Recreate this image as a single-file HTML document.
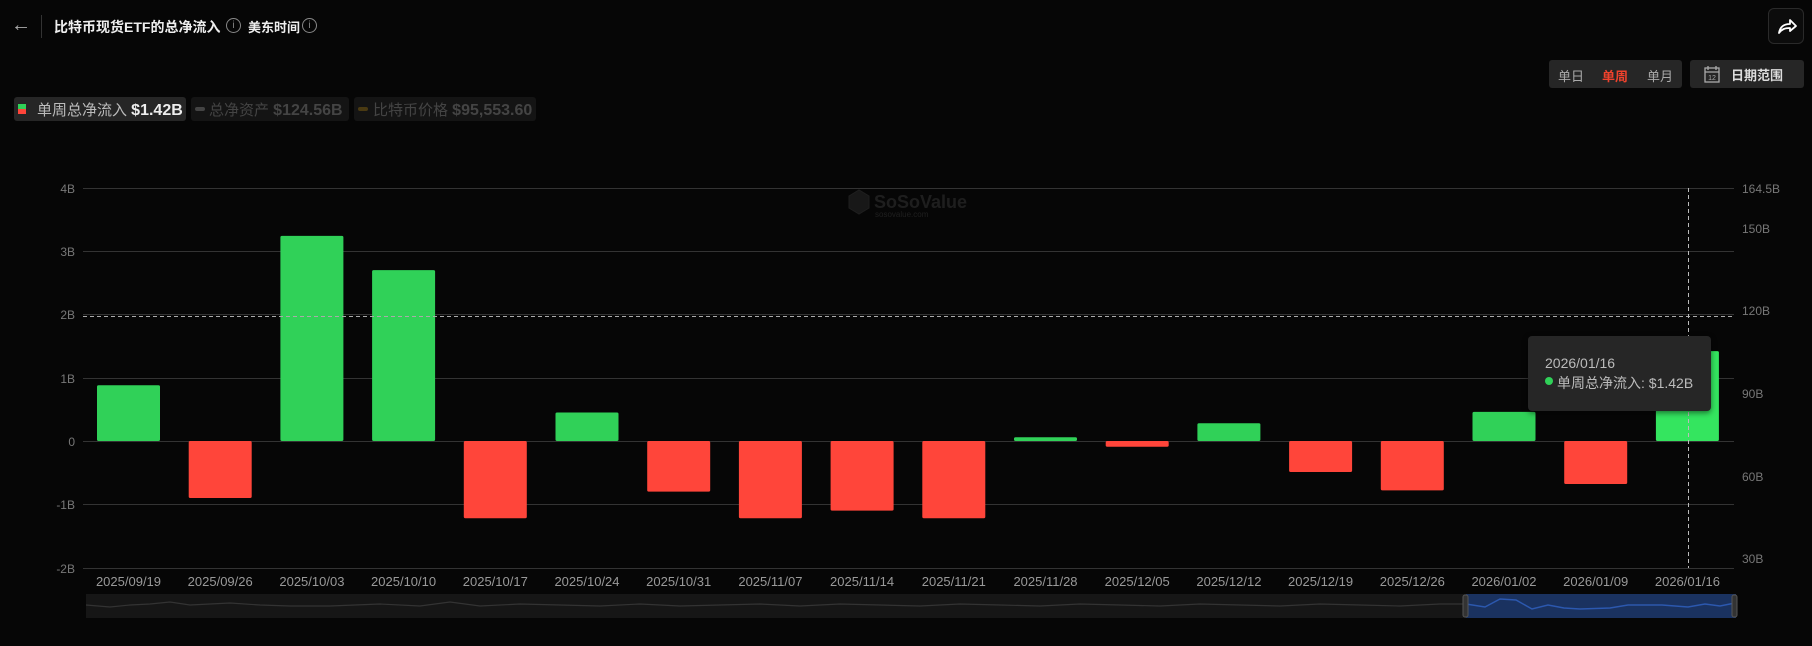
<!DOCTYPE html>
<html><head><meta charset="utf-8"><style>
html,body{margin:0;padding:0;background:#060606;width:1812px;height:646px;overflow:hidden;font-family:"Liberation Sans","Noto Sans CJK SC",sans-serif;}
.a{position:absolute;white-space:nowrap}
</style></head><body>
<div class="a" style="left:11px;top:15px;color:#aaa;font-size:20px;line-height:20px">&#8592;</div>
<div class="a" style="left:41px;top:15px;width:1px;height:23px;background:#333"></div>
<div class="a" style="left:54px;top:17px;color:#eee;font-size:14px;font-weight:bold">比特币现货ETF的总净流入</div>
<div class="a" style="left:226px;top:18px;width:13px;height:13px;border:1px solid #888;border-radius:50%;color:#888;font-size:10px;text-align:center;line-height:13px">i</div>
<div class="a" style="left:248px;top:17px;color:#eee;font-size:13px;font-weight:bold">美东时间</div>
<div class="a" style="left:302px;top:18px;width:13px;height:13px;border:1px solid #888;border-radius:50%;color:#888;font-size:10px;text-align:center;line-height:13px">i</div>

<div class="a" style="left:1768px;top:8px;width:34px;height:34px;border:1px solid #2a2a2a;border-radius:6px;background:#0c0c0c">
<svg width="34" height="34" viewBox="0 0 34 34"><path d="M10 24 C11 18 15 15 21 15 L21 11 L27 17 L21 22 L21 19 C16 19 13 20 10 24Z" fill="none" stroke="#fff" stroke-width="1.8" stroke-linejoin="round"/></svg></div>

<div class="a" style="left:1549px;top:60px;width:133px;height:28px;background:#262626;border-radius:3px"></div>
<div class="a" style="left:1558px;top:66px;color:#aaa;font-size:13px">单日</div>
<div class="a" style="left:1602px;top:66px;color:#f0422c;font-size:13px;font-weight:bold">单周</div>
<div class="a" style="left:1647px;top:66px;color:#aaa;font-size:13px">单月</div>
<div class="a" style="left:1690px;top:60px;width:114px;height:28px;background:#262626;border-radius:3px"></div>
<svg class="a" style="left:1704px;top:65px" width="16" height="18" viewBox="0 0 16 18"><rect x="1" y="3" width="14" height="14" fill="none" stroke="#aaa" stroke-width="1.3"/><path d="M4 1v4M12 1v4M1 7h14" stroke="#aaa" stroke-width="1.3"/><text x="8" y="15" font-size="7" fill="#aaa" text-anchor="middle" font-family="Liberation Sans">12</text></svg>
<div class="a" style="left:1731px;top:65px;color:#ddd;font-size:13px;font-weight:bold">日期范围</div>

<div class="a" style="left:14px;top:97px;width:172px;height:24px;background:#262626;border-radius:3px"></div>
<div class="a" style="left:18px;top:104px;width:8px;height:5px;background:#30d158"></div>
<div class="a" style="left:18px;top:109px;width:8px;height:5px;background:#ff453a"></div>
<div class="a" style="left:37px;top:99px;color:#bbb;font-size:15px">单周总净流入 <b style="color:#eee;font-size:16px">$1.42B</b></div>
<div class="a" style="left:191px;top:97px;width:158px;height:24px;background:#141414;border-radius:3px"></div>
<div class="a" style="left:195px;top:107px;width:10px;height:4px;background:#444;border-radius:2px"></div>
<div class="a" style="left:209px;top:99px;color:#444;font-size:15px">总净资产 <b style="font-size:16px">$124.56B</b></div>
<div class="a" style="left:354px;top:97px;width:182px;height:24px;background:#141414;border-radius:3px"></div>
<div class="a" style="left:358px;top:107px;width:10px;height:4px;background:#4a3a12;border-radius:2px"></div>
<div class="a" style="left:373px;top:99px;color:#444;font-size:15px">比特币价格 <b style="font-size:16px">$95,553.60</b></div>

<svg class="a" style="left:0;top:0" width="1812" height="646">
<g stroke="#333" stroke-width="1">
<line x1="83" x2="1734" y1="188.5" y2="188.5"/><line x1="83" x2="1734" y1="251.5" y2="251.5"/><line x1="83" x2="1734" y1="314.5" y2="314.5"/><line x1="83" x2="1734" y1="378.5" y2="378.5"/><line x1="83" x2="1734" y1="441.5" y2="441.5"/><line x1="83" x2="1734" y1="504.5" y2="504.5"/><line x1="83" x2="1734" y1="568.5" y2="568.5"/>
</g>
<g font-size="12" fill="#777" text-anchor="end" font-family="Liberation Sans">
<text x="75" y="193">4B</text><text x="75" y="256">3B</text><text x="75" y="319">2B</text><text x="75" y="383">1B</text><text x="75" y="446">0</text><text x="75" y="509">-1B</text><text x="75" y="573">-2B</text>
</g>
<g font-size="12" fill="#777" font-family="Liberation Sans">
<text x="1742" y="193">164.5B</text><text x="1742" y="233">150B</text><text x="1742" y="315">120B</text><text x="1742" y="398">90B</text><text x="1742" y="481">60B</text><text x="1742" y="563">30B</text>
</g>
<g opacity="0.4">
<path d="M849 196 l10 -6 10 6 v12 l-10 6 -10 -6z" fill="#333" stroke="#444"/>
<text x="874" y="208" font-size="18" font-weight="bold" fill="#444" font-family="Liberation Sans">SoSoValue</text>
<text x="875" y="217" font-size="8" fill="#444" font-family="Liberation Sans">sosovalue.com</text>
</g>
<g id="bars"></g>
<line x1="83" x2="1734" y1="316.5" y2="316.5" stroke="#aaa" stroke-dasharray="4,3"/>
<line x1="1688.5" x2="1688.5" y1="188" y2="568" stroke="#bbb" stroke-dasharray="4,3"/>
<g id="xl" font-size="13" fill="#999" text-anchor="middle" font-family="Liberation Sans"></g>
<rect x="86" y="594" width="1650" height="24" fill="#161616"/>
<rect x="1466" y="594" width="270" height="24" fill="#1a3260"/>
<polyline points="86,605 110,607 130,605 150,604 170,602 190,605 230,603 260,605 290,606 330,606 380,604 420,606 450,602 480,606 520,604 560,605 600,606 640,604 680,606 720,605 760,604 800,606 840,604 880,605 920,606 960,604 1000,605 1040,606 1080,604 1120,605 1160,606 1200,604 1240,605 1280,606 1320,604 1360,605 1400,606 1440,604 1466,604 1485,607 1500,599 1516,600 1532,609 1548,605 1564,608 1580,609 1610,608 1628,605 1662,605 1688,607 1705,604 1720,606 1735,603" fill="none" stroke="#333" stroke-width="1.2"/>
<polyline points="1466,604 1485,607 1500,599 1516,600 1532,609 1548,605 1564,608 1580,609 1610,608 1628,605 1662,605 1688,607 1705,604 1720,606 1735,603" fill="none" stroke="#2b58b0" stroke-width="1.5"/>
<rect x="1463" y="595" width="5" height="22" rx="2" fill="#333" stroke="#555"/>
<rect x="1732" y="595" width="5" height="22" rx="2" fill="#333" stroke="#555"/>
</svg>
<div class="a" style="left:1528px;top:336px;width:183px;height:75px;background:#262626;border-radius:4px;box-shadow:0 2px 6px rgba(0,0,0,.5)"></div>
<div class="a" style="left:1545px;top:355px;color:#bbb;font-size:14px">2026/01/16</div>
<div class="a" style="left:1545px;top:377px;width:8px;height:8px;border-radius:50%;background:#30d158"></div>
<div class="a" style="left:1557px;top:373px;color:#bbb;font-size:14px">单周总净流入: $1.42B</div>
<script>
var v=[0.88,-0.9,3.24,2.70,-1.22,0.45,-0.8,-1.22,-1.1,-1.22,0.06,-0.09,0.28,-0.49,-0.78,0.46,-0.68,1.42];
var d=["2025/09/19","2025/09/26","2025/10/03","2025/10/10","2025/10/17","2025/10/24","2025/10/31","2025/11/07","2025/11/14","2025/11/21","2025/11/28","2025/12/05","2025/12/12","2025/12/19","2025/12/26","2026/01/02","2026/01/09","2026/01/16"];
var s="",t="";
for(var i=0;i<18;i++){var x=97+i*91.7,h=Math.abs(v[i])*63.3,y=v[i]>0?441-h:441;
var c=v[i]>0?(i==17?"#34e55f":"#30d158"):"#ff453a";
s+='<rect x="'+x.toFixed(1)+'" y="'+y.toFixed(1)+'" width="63" height="'+Math.max(h,2).toFixed(1)+'" rx="1.5" fill="'+c+'"/>';
t+='<text x="'+(x+31.5).toFixed(1)+'" y="586">'+d[i]+'</text>';}
document.getElementById("bars").innerHTML=s;document.getElementById("xl").innerHTML=t;
</script>
</body></html>
